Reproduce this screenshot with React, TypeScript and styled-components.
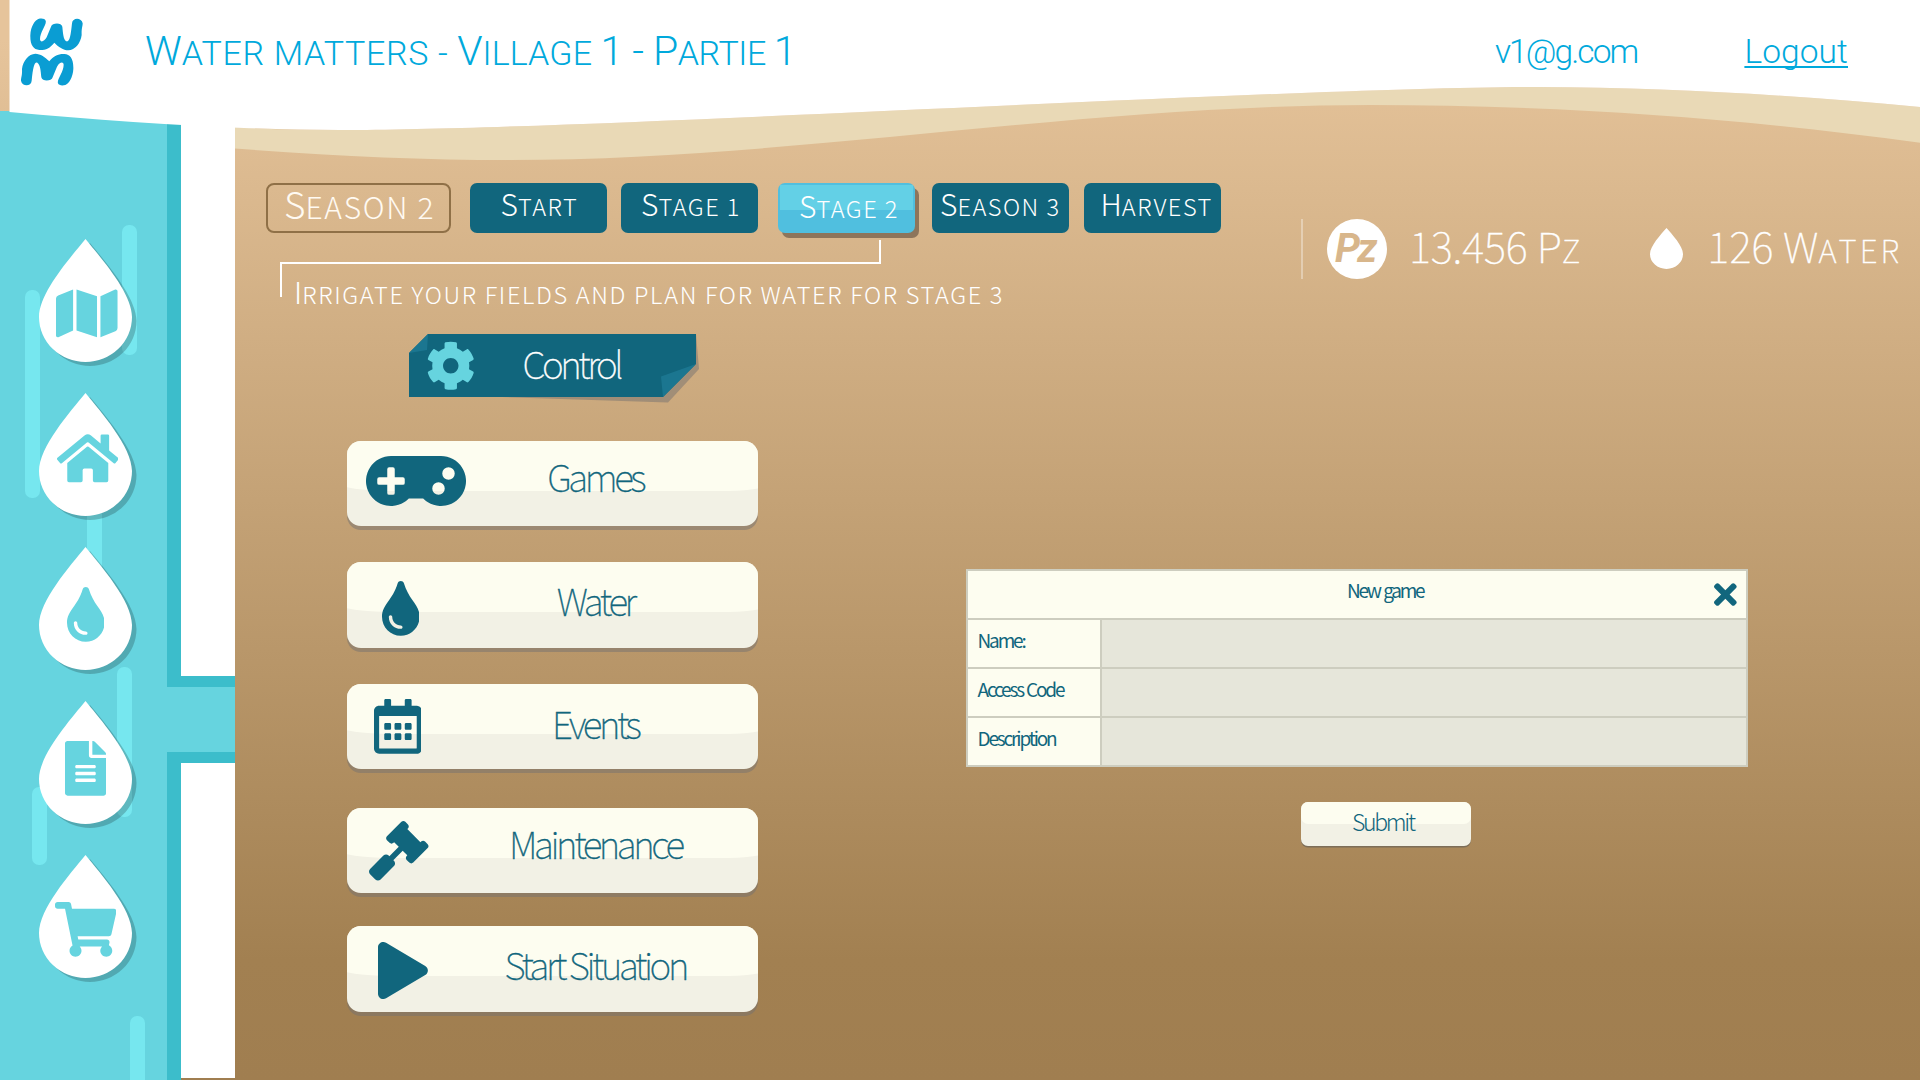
import React from 'react';
import styled, { createGlobalStyle } from 'styled-components';
import {
  FaCog,
  FaFileAlt,
  FaGamepad,
  FaGavel,
  FaHome,
  FaMap,
  FaPlay,
  FaRegCalendarAlt,
  FaShoppingCart,
  FaTimes,
  FaTint,
} from 'react-icons/fa';

const sans = '"Noto Sans CJK JP", "Noto Sans", sans-serif';
const headerFont = 'Roboto, "Noto Sans", sans-serif';

const color = {
  brand: '#00a9dc',
  logo: '#0a9dd3',
  river: '#66d4df',
  bank: '#3cbdcb',
  streak: '#76e7ef',
  petrol: '#11667d',
  petrolLight: '#1b7690',
  cream: '#fdfdf0',
  creamDark: '#f2f1e5',
  rule: '#cdcdbf',
  field: '#e6e6da',
  sand: '#e9d9b6',
};

const GlobalStyle = createGlobalStyle`
  *, *::before, *::after { box-sizing: border-box; }
  body { margin: 0; }
`;

const Page = styled.div`
  position: relative;
  width: 1920px;
  height: 1080px;
  overflow: hidden;
  font-family: ${sans};
  background: linear-gradient(180deg, #e6c49b 40px, #a28051 960px, #a07e50 1080px);
`;

/* ---------- header ---------- */

const Waves = styled.svg`
  position: absolute;
  top: 0;
  left: 0;
`;

const Header = styled.header`
  position: relative;
  z-index: 2;
  display: flex;
  align-items: flex-start;
  height: 111px;
  padding: 18px 72px 0 21px;
  font-family: ${headerFont};
  font-weight: 300;
  color: ${color.brand};
`;

const Title = styled.h1`
  flex: 1;
  margin: 8px 0 0 61px;
  font-size: 41px;
  font-weight: 300;
  line-height: 50px;
  white-space: pre;
`;

const Tight = styled.span`
  letter-spacing: -0.5px;
`;

const HeaderText = styled.span`
  margin: 9px 0 0;
  font-size: 33.5px;
  line-height: 50px;
  letter-spacing: -1.9px;
`;

const Logout = styled.a`
  margin: 9px 0 0 107px;
  font-size: 33.5px;
  line-height: 50px;
  letter-spacing: 0.1px;
  color: inherit;
  text-decoration: underline;
  text-decoration-thickness: 2px;
  text-underline-offset: 3px;
  text-decoration-skip-ink: none;
`;

const Small = styled.span<{ $size: number; $gap?: number }>`
  font-size: ${p => p.$size}px;
  letter-spacing: ${p => p.$gap ?? 0}px;
  text-transform: uppercase;
`;

/* ---------- river sidebar ---------- */

const Body = styled.div`
  display: flex;
  height: 969px;
`;

const River = styled.nav`
  position: relative;
  display: flex;
  flex-direction: column;
  width: 181px;
  padding: 128px 0 0 39px;
  background: ${color.river};
  border-right: 14px solid ${color.bank};
`;

const Streak = styled.span<{ $x: number; $y: number; $h: number }>`
  position: absolute;
  left: ${p => p.$x}px;
  top: ${p => p.$y}px;
  width: 15px;
  height: ${p => p.$h}px;
  border-radius: 7px;
  background: ${color.streak};
`;

const DropButton = styled.a`
  position: relative;
  display: grid;
  width: 93px;
  height: 123px;
  margin-bottom: 31px;
  > * { grid-area: 1 / 1; }
`;

const DropShape = styled.svg`
  overflow: visible;
`;

const DropIcon = styled.span<{ $top: number; $shift: number; $ratio: number }>`
  position: relative;
  display: flex;
  align-items: flex-start;
  justify-content: center;
  padding-top: ${p => p.$top}px;
  padding-left: ${p => p.$shift}px;
  font-size: 54.7px;
  line-height: 0;
  color: ${color.river};
  svg { flex: none; width: ${p => p.$ratio}em; }
`;

const Banks = styled.div`
  display: flex;
  flex-direction: column;
  width: 54px;
  background: #fff;
  height: 967px;
`;

const Channel = styled.div`
  position: relative;
  margin-top: 565px;
  padding: 11px 0;
  background: ${color.bank};
`;

const ChannelWater = styled.div`
  height: 65px;
  margin-left: -14px;
  background: ${color.river};
`;

/* ---------- main ---------- */

const Main = styled.main`
  flex: 1;
  min-width: 0;
`;

const Top = styled.section`
  display: flex;
  height: 223px;
`;

const Season = styled.div`
  width: 1066px;
  padding-top: 72px;
`;

const Tabs = styled.div`
  display: flex;
  height: 49.5px;
  margin-left: 31px;
`;

const Current = styled.div`
  width: 184.5px;
  padding-left: 16px;
  border: 2px solid #8f7047;
  border-radius: 8px;
  font-size: 37px;
  font-weight: 300;
  line-height: 36px;
  white-space: nowrap;
  color: #fffaf2;
`;

const Tab = styled.button<{ $gap: number; $pad: number; $active?: boolean }>`
  display: block;
  width: 137px;
  margin: 0 0 0 ${p => p.$gap}px;
  padding: 0 0 ${p => (p.$active ? 4.5 : 9.5)}px ${p => p.$pad}px;
  border: 0;
  border-radius: 7px;
  font-family: inherit;
  font-size: 30px;
  font-weight: 300;
  line-height: ${p => (p.$active ? 45 : 40)}px;
  text-align: left;
  white-space: nowrap;
  color: #fff;
  background: ${p =>
    p.$active
      ? `linear-gradient(#63d0e6, #63d0e6) 2px 2px / 133px 25px no-repeat #50bfdf`
      : color.petrol};
  box-shadow: ${p => (p.$active ? '4px 5px 0 #8d755b' : 'none')};
`;

const Stub = styled.div`
  width: 2px;
  height: 22px;
  margin: 7.5px 0 0 644px;
  background: #fff;
`;

const Note = styled.p`
  width: 601px;
  height: 35px;
  margin: 0 0 0 45px;
  padding: 7px 0 0 12px;
  border: solid #fff;
  border-width: 2px 0 0 2px;
  font-size: 30px;
  font-weight: 300;
  line-height: 40px;
  white-space: nowrap;
  color: #fff;
`;

const Status = styled.div`
  display: flex;
  height: 60px;
  margin-top: 108px;
  padding-left: 24px;
  border-left: 2px solid rgba(255, 255, 255, 0.35);
  color: #fff;
`;

const Coin = styled.span`
  width: 60px;
  height: 60px;
  padding-left: 8px;
  border-radius: 50%;
  background: #fff;
  font: italic 700 40px/60px Roboto, sans-serif;
  letter-spacing: -2.5px;
  color: #d8b68b;
`;

const Amount = styled.span<{ $before: number; $gap?: number }>`
  margin-left: ${p => p.$before}px;
  font-size: 42px;
  font-weight: 100;
  line-height: 51px;
  letter-spacing: ${p => p.$gap ?? 0}px;
  white-space: nowrap;
  -webkit-text-stroke: 0.4px #fff;
`;

const WaterDrop = styled.svg`
  margin: 9px 0 0 70px;
`;

/* ---------- control menu ---------- */

const Lower = styled.section`
  display: flex;
`;

const Menu = styled.div`
  width: 523px;
  padding-left: 112px;
`;

const Banner = styled.div`
  position: relative;
  width: 287px;
  height: 63px;
  margin: 0 0 43.5px 62px;
  padding-left: 17px;
  display: flex;
`;

const BannerShape = styled.svg`
  position: absolute;
  inset: 0;
  overflow: visible;
`;

const Gear = styled.span`
  position: relative;
  padding-top: 7px;
  font-size: 49.5px;
  line-height: 0;
  color: ${color.river};
`;

const BannerText = styled.span`
  position: relative;
  margin-left: 47px;
  font-size: 37px;
  font-weight: 100;
  line-height: 58px;
  letter-spacing: -3.4px;
  color: #fff;
  -webkit-text-stroke: 0.35px #fff;
`;

const MenuButton = styled.button<{ $after: number }>`
  position: relative;
  display: grid;
  grid-template-columns: 140px 1fr 54.5px;
  width: 411px;
  height: 85.5px;
  margin: 0 0 ${p => p.$after}px;
  padding: 0;
  border: 0;
  border-radius: 14px;
  font-family: inherit;
  color: ${color.petrol};
  background: ${color.creamDark};
  box-shadow: 0 4px 0 rgba(117, 114, 112, 0.5);
`;

const Gloss = styled.span`
  position: absolute;
  inset: 0;
  overflow: hidden;
  border-radius: inherit;
  &::before {
    content: '';
    position: absolute;
    top: 0;
    left: -20px;
    right: -20px;
    height: 50px;
    border-radius: 0 0 50px 60px / 0 0 12px 15px;
    background: ${color.cream};
  }
`;

const MenuIcon = styled.span<{ $size: number; $ratio: number; $x: number; $y: number }>`
  position: relative;
  display: flex;
  align-items: flex-start;
  padding: ${p => p.$y}px 0 0 ${p => p.$x}px;
  font-size: ${p => p.$size}px;
  line-height: 0;
  svg { flex: none; width: ${p => p.$ratio}em; }
`;

const MenuText = styled.span<{ $line: number }>`
  position: relative;
  font-size: 37px;
  font-weight: 100;
  line-height: ${p => p.$line}px;
  letter-spacing: -3.4px;
  white-space: nowrap;
  text-align: center;
  -webkit-text-stroke: 0.35px ${color.petrol};
`;

/* ---------- new game form ---------- */

const Form = styled.form`
  width: 782px;
  margin: 235px 0 0 208px;
  color: ${color.petrol};
`;

const Sheet = styled.div`
  display: grid;
  grid-template-rows: 47px repeat(3, 47px);
  row-gap: 2px;
  padding: 2px;
  height: 198px;
  background: ${color.rule};
`;

const SheetHead = styled.div`
  display: flex;
  padding: 0 9px 0 59px;
  background: ${color.cream};
`;

const SheetTitle = styled.h2`
  flex: 1;
  margin: 0;
  padding-left: 29px;
  font-size: 19px;
  font-weight: 400;
  line-height: 37px;
  letter-spacing: -2.3px;
  word-spacing: 1.5px;
  text-align: center;
`;

const Close = styled.button`
  display: block;
  height: 33px;
  margin-top: 6.5px;
  padding: 0;
  border: 0;
  font-size: 33px;
  line-height: 0;
  color: inherit;
  background: none;
  svg { width: 0.6875em; }
`;

const Field = styled.label`
  display: grid;
  grid-template-columns: 132px 1fr;
  column-gap: 2px;
`;

const FieldName = styled.span`
  padding-left: 9.5px;
  font-size: 19px;
  font-weight: 400;
  line-height: 39.5px;
  letter-spacing: -2.15px;
  word-spacing: 1px;
  background: ${color.cream};
`;

const Input = styled.input`
  width: 100%;
  height: 47px;
  border: 0;
  border-radius: 0;
  background: ${color.field};
`;

const Submit = styled.button`
  display: block;
  width: 170px;
  height: 44px;
  margin: 35px 0 0 335px;
  padding: 0 0 6px 51px;
  border: 0;
  border-radius: 7px;
  font-family: inherit;
  font-size: 23px;
  font-weight: 300;
  line-height: 38px;
  letter-spacing: -2.3px;
  text-align: left;
  color: inherit;
  background: ${color.creamDark};
  box-shadow: 0 1.5px 0 rgba(100, 95, 88, 0.65);
  position: relative;
  &::before {
    content: '';
    position: absolute;
    inset: 0 0 22px;
    border-radius: 7px;
    background: ${color.cream};
  }
  > span { position: relative; }
`;

const DROP = 'M46.5 0C31 19 0 54 0 78a46.5 45 0 0 0 93 0C93 54 62 19 46.5 0Z';

const LOGO_MARK =
  'M137 62C141 75 120 95 120 118C121 128 132 126 140 112L153 80C156 68 184 66 187 80C189 100 190 118 199 124C208 127 212 110 216 70C217 52 245 52 248 70C248 80 244 85 245 105C242 130 225 150 205 151C190 151 175 140 163 128C150 145 135 151 118 150C100 149 90 135 91 105C92 80 105 60 115 57C125 54 135 56 137 62Z';

const Logo = () => (
  <svg width="63" height="69" viewBox="63 54 189 207" fill={color.logo}>
    <path d={LOGO_MARK} />
    <path d={LOGO_MARK} transform="rotate(180 155.5 156)" />
  </svg>
);

const drops = [
  { Icon: FaMap, ratio: 1.125, top: 46.5, shift: 3 },
  { Icon: FaHome, ratio: 1.125, top: 37.6, shift: 4 },
  { Icon: FaTint, ratio: 0.6875, top: 40, shift: 0 },
  { Icon: FaFileAlt, ratio: 0.75, top: 40, shift: 0 },
  { Icon: FaShoppingCart, ratio: 1.125, top: 47, shift: 0 },
];

const menu = [
  { label: 'Games', Icon: FaGamepad, size: 80, ratio: 1.25, x: 19, y: 0.5, line: 71, after: 36 },
  { label: 'Water', Icon: FaTint, size: 54.7, ratio: 0.6875, x: 34.5, y: 19, line: 76, after: 36 },
  { label: 'Events', Icon: FaRegCalendarAlt, size: 54.7, ratio: 0.875, x: 26.5, y: 15.5, line: 78, after: 38.5 },
  { label: 'Maintenance', Icon: FaGavel, size: 59.5, ratio: 1, x: 22, y: 13.5, line: 71, after: 33 },
  { label: 'Start Situation', Icon: FaPlay, size: 57, ratio: 0.875, x: 31, y: 15.5, line: 76, after: 0 },
];

const tabs = [
  { first: 'S', rest: 'tart', gap: 19, pad: 31 },
  { first: 'S', rest: 'tage 1', gap: 14, pad: 20.5 },
  { first: 'S', rest: 'tage 2', gap: 20, pad: 21.5, active: true },
  { first: 'S', rest: 'eason 3', gap: 17, pad: 8.5 },
  { first: 'H', rest: 'arvest', gap: 15, pad: 17 },
];

export default function App() {
  return (
    <Page>
      <GlobalStyle />
      <Header>
        <Logo />
        <Title>
          W<Small $size={34} $gap={0.65}>ater matters - </Small>V<Small $size={34} $gap={0.1}>illage </Small>
          <Tight>1 - P</Tight>
          <Small $size={34} $gap={-0.4}>artie </Small>1
        </Title>
        <HeaderText>v1@g.com</HeaderText>
        <Logout>Logout</Logout>
      </Header>

      <Body>
        <River>
          <Streak $x={122} $y={114} $h={130} />
          <Streak $x={25} $y={179} $h={208} />
          <Streak $x={87} $y={380} $h={100} />
          <Streak $x={117} $y={556} $h={150} />
          <Streak $x={32} $y={676} $h={78} />
          <Streak $x={130} $y={905} $h={80} />
          {drops.map(({ Icon, ratio, top, shift }, i) => (
            <DropButton key={i}>
              <DropShape width="93" height="123" viewBox="0 0 93 123">
                <path d={DROP} transform="translate(4.5 4)" fillOpacity="0.2" />
                <path d={DROP} fill="#fff" />
              </DropShape>
              <DropIcon $top={top} $shift={shift} $ratio={ratio}>
                <Icon />
              </DropIcon>
            </DropButton>
          ))}
        </River>
        <Banks>
          <Channel>
            <ChannelWater />
          </Channel>
        </Banks>

        <Main>
          <Top>
            <Season>
              <Tabs>
                <Current>
                  S<Small $size={30} $gap={1.7}>eason 2</Small>
                </Current>
                {tabs.map(t => (
                  <Tab key={t.first + t.rest} $gap={t.gap} $pad={t.pad} $active={t.active}>
                    {t.first}
                    <Small $size={23.6} $gap={1.5}>{t.rest}</Small>
                  </Tab>
                ))}
              </Tabs>
              <Stub />
              <Note>
                I<Small $size={23.6} $gap={1.65}>rrigate your fields and plan for water for stage 3</Small>
              </Note>
            </Season>
            <Status>
              <Coin>Pz</Coin>
              <Amount $before={22} $gap={-0.1}>
                13.456 P<Small $size={31.5}>z</Small>
              </Amount>
              <WaterDrop width="33" height="41" viewBox="0 0 93 123" preserveAspectRatio="none">
                <path d={DROP} fill="#fff" />
              </WaterDrop>
              <Amount $before={24} $gap={0.2}>
                126 W<Small $size={31.5} $gap={3.2}>ater</Small>
              </Amount>
            </Status>
          </Top>

          <Lower>
            <Menu>
              <Banner>
                <BannerShape width="287" height="63" viewBox="0 0 287 63">
                  <path d="M1 60L259 68.5L290 35L287 0Z" fill="rgba(117,114,112,0.5)" />
                  <path d="M19 0H287V30L254 63H0V19Z" fill={color.petrol} />
                  <path d="M19 0L0 19L18 16Z" fill={color.petrolLight} />
                  <path d="M287 30L254 63L252 42.5Z" fill={color.petrolLight} />
                </BannerShape>
                <Gear>
                  <FaCog />
                </Gear>
                <BannerText>Control</BannerText>
              </Banner>
              {menu.map(({ label, Icon, size, ratio, x, y, line, after }) => (
                <MenuButton key={label} $after={after}>
                  <Gloss />
                  <MenuIcon $size={size} $ratio={ratio} $x={x} $y={y}>
                    <Icon />
                  </MenuIcon>
                  <MenuText $line={line}>{label}</MenuText>
                </MenuButton>
              ))}
            </Menu>

            <Form>
              <Sheet>
                <SheetHead>
                  <SheetTitle>New game</SheetTitle>
                  <Close type="button" aria-label="Close">
                    <FaTimes />
                  </Close>
                </SheetHead>
                {['Name:', 'Access Code', 'Description'].map(name => (
                  <Field key={name}>
                    <FieldName>{name}</FieldName>
                    <Input />
                  </Field>
                ))}
              </Sheet>
              <Submit type="button">
                <span>Submit</span>
              </Submit>
            </Form>
          </Lower>
        </Main>
      </Body>

      <Waves width="1920" height="170" viewBox="0 0 1920 170">
        <path
          d="M235 127C270 130 310 130 340 130C590 130 1290 87 1540 87C1670 87 1800 96 1920 107V142.7C1740 118 1560 105 1370 105C1080 105 790 160 510 160C420 160 330 156 235 148.5Z"
          fill={color.sand}
        />
        <path
          d="M9.5 0H1920V107C1800 96 1670 87 1540 87C1290 87 590 130 340 130C240 130 120 122 9.5 112Z"
          fill="#fff"
        />
      </Waves>
    </Page>
  );
}
